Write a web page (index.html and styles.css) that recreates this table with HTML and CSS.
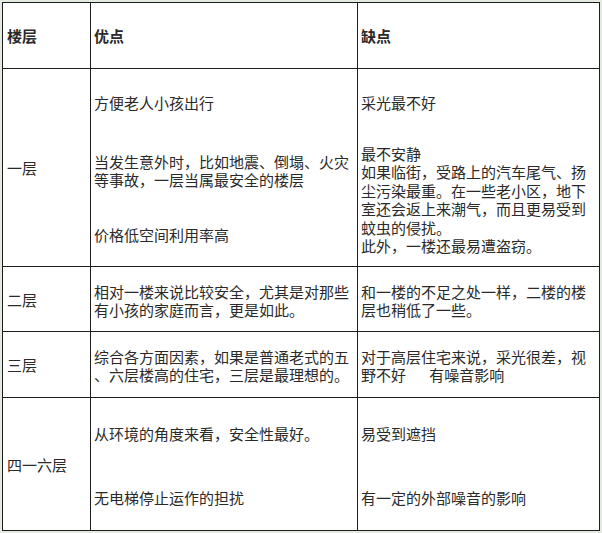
FILE: index.html
```html
<!DOCTYPE html>
<html lang="zh-CN">
<head>
<meta charset="utf-8">
<title>楼层优缺点</title>
<link rel="stylesheet" href="styles.css">
</head>
<body>
<table class="floors">
  <tr class="r-head">
    <th class="c-floor">楼层</th>
    <th class="c-pro">优点</th>
    <th class="c-con">缺点</th>
  </tr>
  <tr class="r-one">
    <td class="floor">一层</td>
    <td class="top">
      <p class="p-a">方便老人小孩出行</p>
      <p class="p-b">当发生意外时，比如地震、倒塌、火灾<br>等事故，一层当属最安全的楼层</p>
      <p>价格低空间利用率高</p>
    </td>
    <td class="top">
      <p class="p-c">采光最不好</p>
      <p>最不安静<br>如果临街，受路上的汽车尾气、扬<br>尘污染最重。在一些老小区，地下<br>室还会返上来潮气，而且更易受到<br>蚊虫的侵扰。<br>此外，一楼还最易遭盗窃。</p>
    </td>
  </tr>
  <tr class="r-two">
    <td class="floor">二层</td>
    <td class="mid">相对一楼来说比较安全，尤其是对那些<br>有小孩的家庭而言，更是如此。</td>
    <td class="mid">和一楼的不足之处一样，二楼的楼<br>层也稍低了一些。</td>
  </tr>
  <tr class="r-three">
    <td class="floor">三层</td>
    <td class="mid">综合各方面因素，如果是普通老式的五<br>、六层楼高的住宅，三层是最理想的。</td>
    <td class="mid">对于高层住宅来说，采光很差，视<br>野不好　&nbsp;&nbsp;有噪音影响</td>
  </tr>
  <tr class="r-four">
    <td class="floor">四一六层</td>
    <td class="top4">
      <p class="p-d">从环境的角度来看，安全性最好。</p>
      <p>无电梯停止运作的担扰</p>
    </td>
    <td class="top4">
      <p class="p-d">易受到遮挡</p>
      <p>有一定的外部噪音的影响</p>
    </td>
  </tr>
</table>
</body>
</html>
```

FILE: styles.css
```css
html, body {
  margin: 0;
  padding: 0;
  background: #e3ebe1;
}

body {
  width: 602px;
  height: 533px;
  overflow: hidden;
  font-family: "Liberation Sans", "Noto Sans CJK SC", sans-serif;
  font-size: 15px;
  line-height: 18.5px;
  color: #2a2a2a;
}

.floors {
  margin: 2px 0 0 2px;
  border-collapse: separate;
  border-spacing: 0;
  table-layout: fixed;
  width: 598px;
  background: #ffffff;
  border-left: 1px solid #1e1e1e;
  border-top: 1px solid #1e1e1e;
}

.floors th,
.floors td {
  box-sizing: border-box;
  border-right: 1px solid #1e1e1e;
  border-bottom: 1px solid #1e1e1e;
  padding: 0 3px;
  text-align: left;
  vertical-align: middle;
  white-space: nowrap;
}

.floors th {
  font-weight: bold;
  padding-top: 3px;
}

.c-floor { width: 88px; }
.c-pro { width: 267px; }
.c-con { width: 242px; }

.floors .c-floor,
.floors .floor {
  padding-left: 4px;
}

.r-head > * { height: 66px; }
.r-one > * { height: 198px; }
.r-two > * { height: 65px; }
.r-three > * { height: 66px; }
.r-four > * { height: 133px; }

.floors .floor { padding-top: 4px; }

.floors .mid { padding-top: 6px; }
.r-three .mid { padding-top: 5px; }

.floors .top {
  vertical-align: top;
  padding-top: 26px;
}

.floors .top4 {
  vertical-align: top;
  padding-top: 28px;
}

.floors p {
  margin: 0;
}

.floors .p-a { margin-bottom: 40px; }
.floors .p-b { margin-bottom: 36px; }
.floors .p-c { margin-bottom: 32px; }
.floors .p-d { margin-bottom: 45px; }
```
